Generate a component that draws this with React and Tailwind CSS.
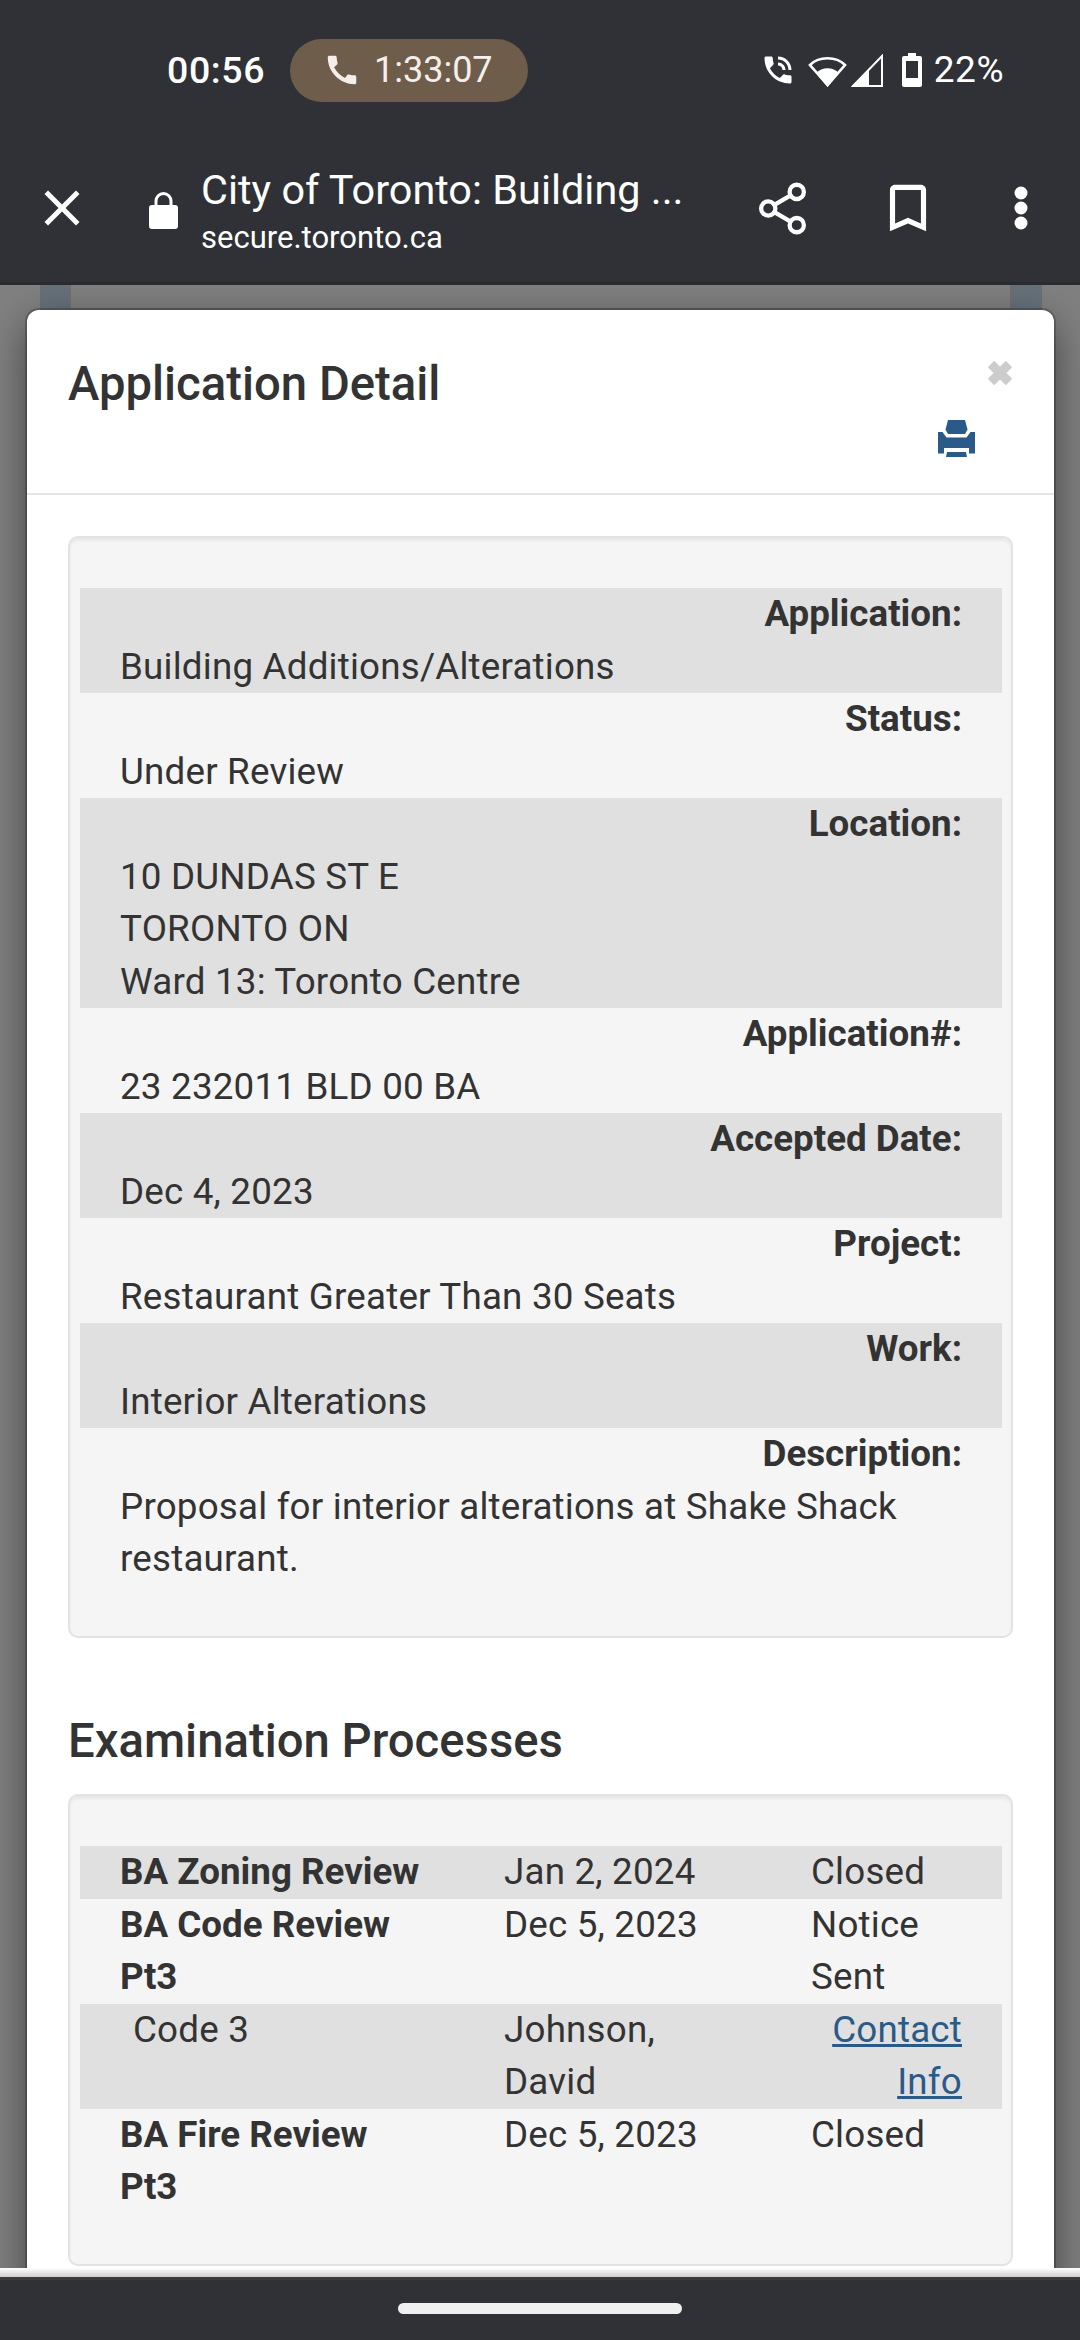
import { X, Share2 } from 'lucide-react';
import { MdClose, MdBookmarkBorder } from 'react-icons/md';

const DETAILS = [
  { label: 'Application:', lines: ['Building Additions/Alterations'] },
  { label: 'Status:', lines: ['Under Review'] },
  { label: 'Location:', lines: ['10 DUNDAS ST E', 'TORONTO ON', 'Ward 13: Toronto Centre'] },
  { label: 'Application#:', lines: ['23 232011 BLD 00 BA'] },
  { label: 'Accepted Date:', lines: ['Dec 4, 2023'] },
  { label: 'Project:', lines: ['Restaurant Greater Than 30 Seats'] },
  { label: 'Work:', lines: ['Interior Alterations'] },
  { label: 'Description:', lines: ['Proposal for interior alterations at Shake Shack restaurant.'] },
];

function StatusBar() {
  return (
    <div className="h-[134px] flex items-center pt-[6px] pl-[167px] pr-[76px] text-white">
      <span className="w-[97px] text-[37.5px] font-medium tracking-[0.6px] whitespace-nowrap">00:56</span>
      <div className="ml-[26px] w-[238px] h-[63px] rounded-full bg-[#6e5d4a] flex items-center pl-[33px] gap-[13px] text-[#f5eeea]">
        <svg width="38" height="38" viewBox="0 0 24 24" fill="currentColor">
          <path d="M20.01 15.38c-1.23 0-2.42-.2-3.53-.56-.35-.12-.74-.03-1.01.24l-1.57 1.97c-2.83-1.35-5.48-3.9-6.89-6.83l1.95-1.66c.27-.28.35-.67.24-1.02-.37-1.11-.56-2.3-.56-3.53 0-.54-.45-.99-.99-.99H4.19C3.65 3 3 3.24 3 3.99 3 13.28 10.73 21 20.01 21c.71 0 .99-.63.99-1.18v-3.45c0-.54-.45-.99-.99-.99z" />
        </svg>
        <span className="text-[36px]">1:33:07</span>
      </div>
      <div className="ml-auto flex items-center">
        <svg width="36" height="36" viewBox="0 0 24 24" fill="white">
          <path d="M20 15.5c-1.25 0-2.45-.2-3.57-.57-.35-.11-.74-.03-1.02.24l-2.2 2.2c-2.83-1.44-5.15-3.75-6.59-6.59l2.2-2.21c.28-.26.36-.65.25-1-.37-1.12-.57-2.32-.57-3.57 0-.55-.45-1-1-1H4c-.55 0-1 .45-1 1 0 9.39 7.61 17 17 17 .55 0 1-.45 1-1v-3.5c0-.55-.45-1-1-1zM19 12h2c0-4.97-4.03-9-9-9v2c3.87 0 7 3.13 7 7zm-4 0h2c0-2.76-2.24-5-5-5v2c1.66 0 3 1.34 3 3z" />
        </svg>
        <svg width="39" height="33" viewBox="0 0 39 33" className="ml-[12px]">
          <path d="M19.5 31 2 11C11 2 28 2 37 11Z" fill="none" stroke="white" strokeWidth="2.6" />
          <path d="M19.5 33 8 19C14 12.5 25 12.5 31 19Z" fill="white" />
        </svg>
        <svg width="32" height="33" viewBox="0 0 32 33" className="ml-[4px]">
          <path d="M2 32 31 2V32Z" fill="none" stroke="white" strokeWidth="2" />
          <path d="M0 33 18 15V33Z" fill="white" />
        </svg>
        <svg width="20" height="34" viewBox="0 0 20 34" className="ml-[19px]">
          <path d="M6 0h8v3h4a2 2 0 0 1 2 2v27a2 2 0 0 1-2 2H2a2 2 0 0 1-2-2V5a2 2 0 0 1 2-2h4Z" fill="white" />
          <rect x="4" y="8" width="12" height="17" fill="#303136" />
        </svg>
        <span className="ml-[12px] text-[37px] tracking-[0.5px]">22%</span>
      </div>
    </div>
  );
}

function Toolbar() {
  return (
    <div className="h-[148px] flex items-center text-white">
      <MdClose size={60} className="ml-[32px] shrink-0" />
      <svg width="29" height="37" viewBox="0 0 29 37" className="ml-[57px] shrink-0 mt-[4px]">
        <path d="M7 15V9a7.5 7.5 0 0 1 15 0v6" fill="none" stroke="white" strokeWidth="3" />
        <rect x="0" y="13" width="29" height="24" rx="3" fill="white" />
      </svg>
      <div className="ml-[23px] w-[500px] shrink-0 mt-[8px]">
        <div className="text-[41.4px] leading-[52px] whitespace-nowrap">City of Toronto: Building ...</div>
        <div className="text-[31px] leading-[44px]">secure.toronto.ca</div>
      </div>
      <Share2 size={57} strokeWidth={1.8} className="ml-[53px] shrink-0" />
      <MdBookmarkBorder size={62} className="ml-[66px] shrink-0" />
      <svg width="14" height="44" viewBox="0 0 14 44" fill="white" className="ml-[75px] shrink-0">
        <circle cx="7" cy="7" r="6.5" />
        <circle cx="7" cy="22" r="6.5" />
        <circle cx="7" cy="37" r="6.5" />
      </svg>
    </div>
  );
}

function PrintIcon() {
  return (
    <svg width="37" height="37" viewBox="0 0 37 37" fill="#2a5a87">
      <path d="M10 0h17l2.5 9.5-2.5 4.5H10L7.5 9.5Z" />
      <path d="M0 12h4.5l4 5.5h20l4-5.5H37v21.5H31V28H6v5.5H0Z" />
      <path d="M9 32h19l1 5H8Z" />
    </svg>
  );
}

function Well({ children }) {
  return (
    <div className="mx-[41px] border-2 border-[#e3e3e3] rounded-[10px] bg-[#f5f5f5] pl-[10px] pr-[9px] py-[50px] shadow-[inset_0_3px_3px_rgba(0,0,0,0.05)]">
      {children}
    </div>
  );
}

function DetailRow({ row, shaded }) {
  return (
    <div className={`px-[40px] ${shaded ? 'bg-[#e0e0e0]' : ''}`}>
      <div className="text-right font-bold tracking-normal">{row.label}</div>
      {row.lines.map((line) => (
        <div key={line}>{line}</div>
      ))}
    </div>
  );
}

function Process({ name, date, status, shaded }) {
  return (
    <div className={`grid grid-cols-[384px_307px_1fr] px-[40px] ${shaded ? 'bg-[#e0e0e0]' : ''}`}>
      <div className="font-bold tracking-normal pr-[80px]">{name}</div>
      <div className="pr-[70px]">{date}</div>
      <div>{status}</div>
    </div>
  );
}

export default function App() {
  return (
    <div className="w-[1080px] h-[2340px] flex flex-col overflow-hidden bg-[#303136] font-['Roboto',sans-serif]">
      <div className="shrink-0 border-b-[3px] border-[#2a2b2f]">
        <StatusBar />
        <Toolbar />
      </div>

      {/* dimmed page behind the dialog */}
      <div className="relative flex-1 min-h-0 overflow-hidden bg-[#808080] pl-[27px] pr-[26px]">
        <div className="absolute top-0 left-[40px] right-[38px] h-[25px] bg-[#66717a]" />
        <div className="absolute top-0 left-[69px] right-[68px] h-[25px] bg-[#7f7f7f] border-x-2 border-b-2 border-[#707070]" />

        <div className="relative mt-[25px] pb-[40px] bg-white rounded-t-[12px] text-[#333333] text-[36.75px] leading-[52.5px] tracking-[0.2px] shadow-[0_0_0_2px_rgba(0,0,0,0.2),0_13px_39px_rgba(0,0,0,0.5)]">
          <div className="h-[185px] border-b-2 border-[#e5e5e5] relative">
            <h4 className="absolute left-[41px] top-[44px] text-[47.25px] leading-[60px] font-medium tracking-normal">Application Detail</h4>
            <span className="absolute right-[36px] top-[45px]">
              <X size={36} strokeWidth={6} strokeLinecap="butt" color="#cccccc" />
            </span>
            <span className="absolute right-[79px] top-[110px]">
              <PrintIcon />
            </span>
          </div>

          <div className="mt-[41px]">
            <Well>
              {DETAILS.map((row, i) => (
                <DetailRow key={row.label} row={row} shaded={i % 2 === 0} />
              ))}
            </Well>
          </div>

          <h4 className="mx-[41px] mt-[77px] mb-[27px] text-[47.25px] leading-[52.5px] font-medium tracking-normal">Examination Processes</h4>

          <Well>
            <Process name="BA Zoning Review" date="Jan 2, 2024" status="Closed" shaded />
            <Process name="BA Code Review Pt3" date="Dec 5, 2023" status="Notice Sent" />
            <div className="grid grid-cols-[384px_307px_1fr] px-[40px] bg-[#e0e0e0]">
              <div className="pl-[13px]">Code 3</div>
              <div className="pr-[70px]">Johnson, David</div>
              <div className="text-right text-[#2a5a87] underline">Contact Info</div>
            </div>
            <Process name="BA Fire Review Pt3" date="Dec 5, 2023" status="Closed" />
          </Well>
        </div>
      </div>

      <div className="shrink-0 h-[72px] flex flex-col">
        <div className="h-[9px] bg-gradient-to-b from-[#ffffff] to-[#cfcfcf]" />
        <div className="h-[3px] bg-[#3e3b3a]" />
        <div className="flex-1 flex items-center justify-center pb-[3px]">
          <div className="w-[284px] h-[11px] rounded-full bg-[#efefef]" />
        </div>
      </div>
    </div>
  );
}
